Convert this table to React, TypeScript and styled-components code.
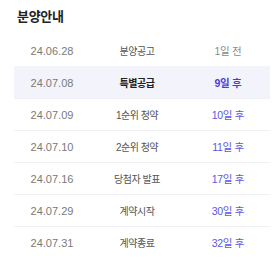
import styled, { createGlobalStyle } from 'styled-components';

const GlobalStyle = createGlobalStyle`
  body {
    margin: 0;
    background: #fff;
    font-family: 'Liberation Sans', 'Noto Sans CJK KR', sans-serif;
  }
`;

interface ScheduleItem {
  date: string;
  name: string;
  dday: string;
  past?: boolean;
  current?: boolean;
}

const schedule: ScheduleItem[] = [
  { date: '24.06.28', name: '분양공고', dday: '1일 전', past: true },
  { date: '24.07.08', name: '특별공급', dday: '9일 후', current: true },
  { date: '24.07.09', name: '1순위 청약', dday: '10일 후' },
  { date: '24.07.10', name: '2순위 청약', dday: '11일 후' },
  { date: '24.07.16', name: '당첨자 발표', dday: '17일 후' },
  { date: '24.07.29', name: '계약시작', dday: '30일 후' },
  { date: '24.07.31', name: '계약종료', dday: '32일 후' },
];

const Panel = styled.section`
  width: 274px;
  height: 264px;
  box-sizing: border-box;
  padding: 7px 4px 0 14px;
`;

const Title = styled.h3`
  margin: 0 0 9px 3px;
  font-size: 13px;
  line-height: 18px;
  font-weight: 700;
  color: #222;
  letter-spacing: -0.3px;
  font-family: 'Noto Sans CJK KR', sans-serif;
`;

const Table = styled.div`
  display: flex;
  flex-direction: column;
`;

const Row = styled.div<{ $current?: boolean }>`
  display: grid;
  grid-template-columns: 76px 94px 1fr;
  align-items: center;
  height: 32px;
  box-sizing: border-box;
  border-top: 1px solid ${({ $current }) => ($current ? '#f3f4fb' : '#f0f0f2')};
  background: ${({ $current }) => ($current ? '#f3f4fb' : 'transparent')};

  &:first-child {
    border-top-color: transparent;
  }
`;

const DateCell = styled.span`
  text-align: center;
  font-size: 11px;
  color: #7a7a7a;
`;

const NameCell = styled.span<{ $current?: boolean }>`
  text-align: center;
  font-size: 10px;
  letter-spacing: -0.5px;
  font-family: 'Liberation Sans', 'Noto Sans CJK KR', sans-serif;
  font-weight: ${({ $current }) => ($current ? 700 : 400)};
  color: ${({ $current }) => ($current ? '#222' : '#555')};
`;

const DdayCell = styled.span<{ $current?: boolean; $past?: boolean }>`
  text-align: center;
  padding-left: 2px;
  font-size: 10.5px;
  letter-spacing: -0.3px;
  font-family: 'Liberation Sans', 'Noto Sans CJK KR', sans-serif;
  font-weight: ${({ $current }) => ($current ? 700 : 400)};
  color: ${({ $current, $past }) => ($past ? '#8a8a8a' : $current ? '#463fd9' : '#5b57e0')};
`;

export default function App() {
  return (
    <>
      <GlobalStyle />
      <Panel>
        <Title>분양안내</Title>
        <Table>
          {schedule.map((item) => (
            <Row key={item.date} $current={item.current}>
              <DateCell>{item.date}</DateCell>
              <NameCell $current={item.current}>{item.name}</NameCell>
              <DdayCell $current={item.current} $past={item.past}>
                {item.dday}
              </DdayCell>
            </Row>
          ))}
        </Table>
      </Panel>
    </>
  );
}
